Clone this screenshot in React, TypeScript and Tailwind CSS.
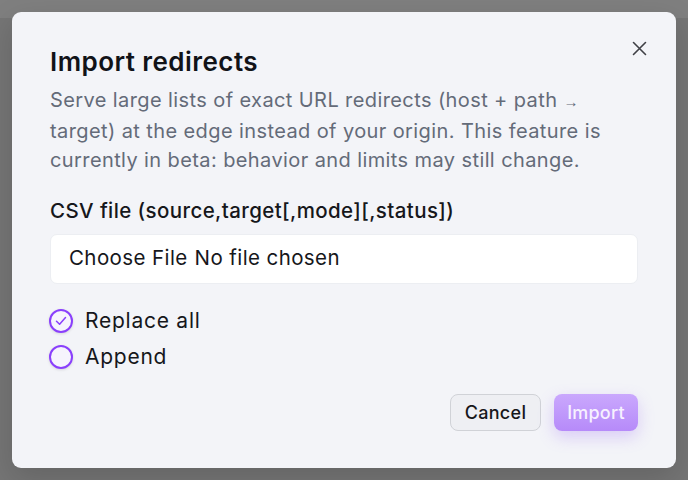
import React from "react";

export default function App() {
  return (
    <div
      className="relative w-[688px] h-[480px] overflow-hidden flex flex-col bg-[#767676]"
      style={{ fontFamily: "Inter, 'Noto Sans', sans-serif" }}
    >
      <div className="h-[18px] bg-[#7f7f7f]" />
      <div className="flex-1 bg-[#757575]" />

      <div className="absolute left-[12px] top-[12px] w-[664px] h-[456px] rounded-[9px] bg-[#f3f4f8] shadow-[0_10px_30px_rgba(0,0,0,0.15)] flex flex-col px-[38px] pt-[34px] pb-[37px]">
        <div className="relative">
          <h2 className="text-[26px] leading-[32px] font-semibold text-[#111318] tracking-[0.45px]">
            Import redirects
          </h2>
          <button className="absolute right-[-12px] top-[-9px] w-[22px] h-[22px] flex items-center justify-center text-[#3f4046]">
            <svg width="15" height="15" viewBox="0 0 15 15" fill="none">
              <path d="M1.5 1.5 L13.5 13.5 M13.5 1.5 L1.5 13.5" stroke="currentColor" strokeWidth="1.6" strokeLinecap="round" />
            </svg>
          </button>
        </div>
        <p className="mt-[8px] text-[20px] leading-[29.5px] text-[#646b79] tracking-[0.4px]">
          Serve large lists of exact URL redirects (host + path{" "}
          <span className="text-[15px]" style={{ fontFamily: "'Liberation Sans', sans-serif" }}>→</span>{" "}
          target) at the edge instead of your origin. This feature is currently in beta: behavior and limits may still change.
        </p>
        <label className="mt-[21px] text-[20.5px] leading-[28px] font-medium text-[#16171b] tracking-[0.4px]">
          CSV file (source,target[,mode][,status])
        </label>
        <div className="mt-[9px] h-[50px] rounded-[7px] bg-white border border-[#eceef2] flex items-center pl-[18px] text-[20.5px] text-[#16171b] tracking-[0.4px]">
          <span>Choose File</span>
          <span className="ml-[7px]">No file chosen</span>
        </div>
        <div className="mt-[19px] flex flex-col">
          <div className="h-[36px] flex items-center">
            <span className="w-[24px] h-[24px] rounded-full border-[2px] border-[#8a3ffc] bg-[#f6f4fd] shadow-[0_1px_3px_rgba(0,0,0,0.12)] flex items-center justify-center -ml-[1px]">
              <svg width="14" height="14" viewBox="0 0 14 14" fill="none">
                <path d="M2.5 7.3 L5.6 10.3 L11.5 3.6" stroke="#8a3ffc" strokeWidth="1.5" strokeLinecap="round" strokeLinejoin="round" />
              </svg>
            </span>
            <span className="ml-[12px] text-[21px] text-[#16171b] tracking-[0.75px]">Replace all</span>
          </div>
          <div className="h-[36px] flex items-center">
            <span className="w-[24px] h-[24px] rounded-full border-[2px] border-[#8a3ffc] bg-[#f6f4fd] shadow-[0_1px_3px_rgba(0,0,0,0.12)] -ml-[1px]" />
            <span className="ml-[12px] text-[21px] text-[#16171b] tracking-[0.75px]">Append</span>
          </div>
        </div>
        <div className="mt-auto flex justify-end gap-[13px]">
          <button className="w-[91px] h-[37px] rounded-[8px] bg-[#eeeff3] border border-[#d0d2d7] text-[18px] font-medium text-[#16171b] tracking-[0.3px] flex items-center justify-center">
            Cancel
          </button>
          <button className="w-[84px] h-[37px] rounded-[8px] bg-gradient-to-b from-[#caa8fd] to-[#b68af9] text-[18px] font-medium text-[#f7f1ff] tracking-[0.2px] shadow-[0_6px_16px_rgba(150,100,246,0.28)] flex items-center justify-center">
            Import
          </button>
        </div>
      </div>
    </div>
  );
}
